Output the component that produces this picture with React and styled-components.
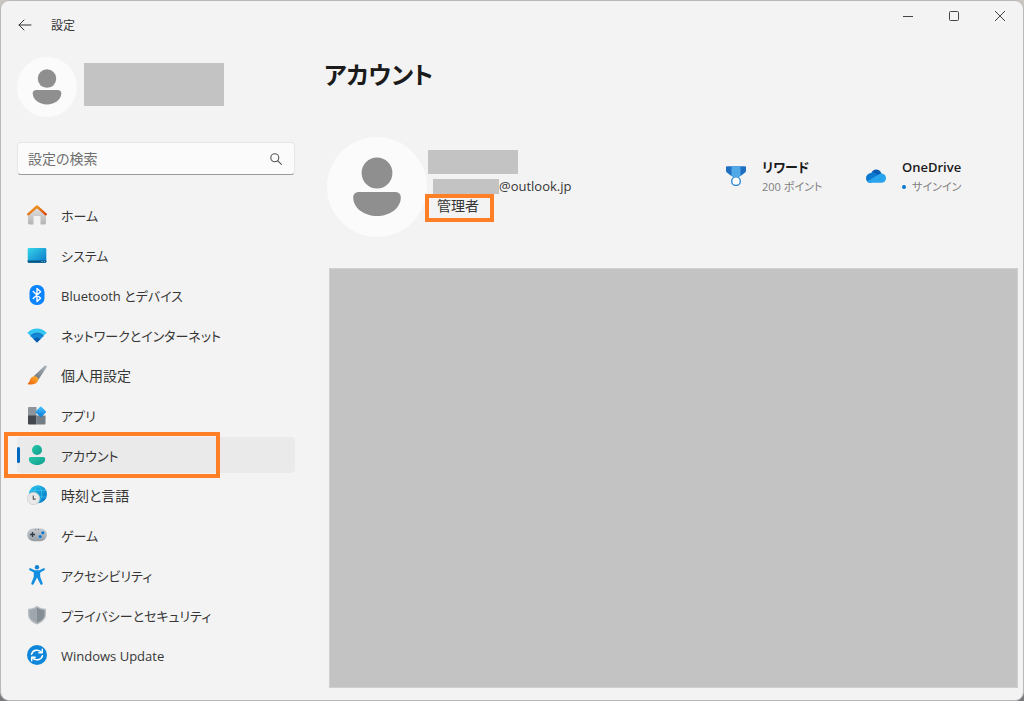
import React from "react";
import styled, { createGlobalStyle, css } from "styled-components";

const GlobalStyle = createGlobalStyle`
  *, *::before, *::after { box-sizing: border-box; }
  body {
    margin: 0;
    background: linear-gradient(to bottom, #c9c6c0 50%, #77777c);
    color: #363636;
    font-family: "Open Sans", "Noto Sans CJK JP", sans-serif;
    font-size: 14px;
    line-height: 20px;
    font-feature-settings: "palt";
  }
  button, input { font: inherit; color: inherit; font-feature-settings: inherit; }
  h1, h2, p, ul { margin: 0; padding: 0; }
`;

const Window = styled.div`
  display: flex;
  flex-direction: column;
  min-height: 100vh;
  border: 1px solid #b8b8b8;
  border-radius: 9px;
  background: #f3f3f3;
`;

const TitleBar = styled.header`
  display: flex;
  align-items: center;
  height: 48px;
  padding-left: 12px;
`;

const BackButton = styled.button`
  display: grid;
  place-items: center;
  width: 24px;
  height: 24px;
  padding: 0;
  border: 0;
  background: none;
`;

const AppName = styled.span`
  margin-left: 14px;
  padding-top: 2px;
  font-size: 12px;
`;

const CaptionButtons = styled.div`
  display: flex;
  align-self: flex-start;
  margin-left: auto;
`;

const CaptionButton = styled.button`
  display: grid;
  place-items: center;
  width: 46px;
  height: 30px;
  padding: 0;
  border: 0;
  background: none;
`;

const Body = styled.div`
  display: flex;
  flex: 1;
  gap: 29px;
  padding: 8px 5px 12px 16px;
`;

const Sidebar = styled.aside`
  flex: none;
  width: 278px;
`;

const UserCard = styled.div`
  display: flex;
  align-items: flex-start;
  gap: 7px;
`;

const Avatar = styled.svg`
  display: block;
  flex: none;
  width: ${(p) => p.$size}px;
  height: ${(p) => p.$size}px;
`;

const Mask = styled.span`
  display: block;
  flex: none;
  width: ${(p) => p.$w}px;
  height: ${(p) => p.$h}px;
  background: #c3c3c3;
`;

const UserMask = styled(Mask)`
  margin-top: 6px;
`;

const SearchBox = styled.label`
  display: flex;
  align-items: center;
  height: 33px;
  margin-top: 25px;
  padding: 0 12px 0 10px;
  border: 1px solid #e6e6e6;
  border-bottom-color: #9a9a9a;
  border-radius: 4px;
  background: #fbfbfb;
`;

const SearchInput = styled.input`
  flex: 1;
  min-width: 0;
  padding: 0;
  border: 0;
  outline: 0;
  background: none;
  &::placeholder { color: #707070; opacity: 1; }
`;

const NavList = styled.ul`
  display: flex;
  flex-direction: column;
  gap: 4px;
  margin-top: 22px;
  list-style: none;
`;

const NavItem = styled.li`
  position: relative;
`;

const NavLink = styled.a`
  display: flex;
  align-items: center;
  gap: 14px;
  height: 36px;
  padding-left: 10px;
  border-radius: 4px;
  color: inherit;
  text-decoration: none;
  ${(p) =>
    p.$active &&
    css`
      background: #eaeaea;
      &::before {
        content: "";
        position: absolute;
        left: 0;
        top: 10px;
        width: 3px;
        height: 16px;
        border-radius: 2px;
        background: #0067c0;
      }
    `}
`;

const NavLabel = styled.span`
  padding-top: 2px;
  font-size: ${(p) => (p.$kanji ? 14 : 13)}px;
`;

const NavIcon = styled.svg`
  display: block;
  flex: none;
  width: 20px;
  height: 20px;
`;

const Marker = styled.span`
  position: absolute;
  border: 4px solid #ff7f27;
  pointer-events: none;
`;

const NavMarker = styled(Marker)`
  left: -13px;
  top: -5px;
  width: 216px;
  height: 46px;
`;

const RoleMarker = styled(Marker)`
  left: -12px;
  top: -2px;
  width: 69px;
  height: 28px;
`;

const Main = styled.main`
  display: flex;
  flex: 1;
  flex-direction: column;
  min-width: 0;
`;

const Heading = styled.h1`
  font-size: 24px;
  font-weight: 600;
  line-height: 36px;
  color: #1b1b1b;
`;

const Profile = styled.section`
  display: flex;
  margin-top: 44px;
  padding: 0 12px 0 3px;
`;

const Identity = styled.div`
  padding: 13px 0 0 1px;
`;

const EmailRow = styled.p`
  display: flex;
  align-items: center;
  margin-top: 2px;
  padding-left: 5px;
  font-size: 13px;
`;

const Role = styled.p`
  position: relative;
  width: max-content;
  margin-left: 9px;
`;

const Services = styled.div`
  display: flex;
  margin-left: auto;
  padding-top: 20px;
`;

const Service = styled.a`
  display: flex;
  gap: 16px;
  width: 140px;
  color: inherit;
  text-decoration: none;
`;

const ServiceIcon = styled(NavIcon)`
  margin-top: 9px;
`;

const ServiceName = styled.span`
  display: block;
  font-size: 13px;
  font-weight: 600;
  color: #1b1b1b;
`;

const ServiceNote = styled.span`
  display: flex;
  align-items: center;
  gap: 6px;
  font-size: 11px;
  color: #808080;
`;

const Dot = styled.span`
  width: 4px;
  height: 4px;
  border-radius: 50%;
  background: #0078d4;
`;

const Panel = styled.section`
  flex: 1;
  margin: 31px 0 0 5px;
  border: 1px solid #cfcfcf;
  background: #c3c3c3;
`;

function Person({ size }) {
  return (
    <Avatar $size={size} viewBox="0 0 100 100" aria-hidden="true">
      <circle cx="50" cy="50" r="50" fill="#fbfbfb" />
      <circle cx="50" cy="36" r="15.4" fill="#8f8f8f" />
      <path d="M32 55h36c3.600 0 5.800 2.200 5.800 5.500C73.800 71 63 79 50 79S26.200 71 26.200 60.500C26.200 57.200 28.400 55 32 55z" fill="#8f8f8f" />
    </Avatar>
  );
}

const icons = {
  home: (
    <>
      <defs>
        <linearGradient id="homeWall" x1="0" y1="0" x2="0" y2="1"><stop stopColor="#e4e4e4" /><stop offset="1" stopColor="#b4b4b4" /></linearGradient>
        <linearGradient id="homeRoof" x1="0" y1="0" x2="1" y2="1"><stop stopColor="#f5a623" /><stop offset="1" stopColor="#d9480f" /></linearGradient>
      </defs>
      <path d="M1 9.500 10 1.500l9 8V18a1.400 1.400 0 0 1-1.400 1.400H13.500V12a1 1 0 0 0-1-1h-5a1 1 0 0 0-1 1v7.400H2.400A1.400 1.400 0 0 1 1 18z" fill="url(#homeWall)" />
      <path d="M1.200 9.300 10 1.500l8.800 7.800" fill="none" stroke="url(#homeRoof)" strokeWidth="2.400" strokeLinecap="round" strokeLinejoin="round" />
    </>
  ),
  system: (
    <>
      <defs><linearGradient id="sys" x1="0" y1="0" x2="1" y2="1"><stop stopColor="#35d6ea" /><stop offset="1" stopColor="#0a76c9" /></linearGradient></defs>
      <rect x="0.700" y="3" width="18.600" height="14.700" rx="1.200" fill="url(#sys)" />
      <path d="M.7 15.500h18.600v1a1.200 1.200 0 0 1-1.200 1.200H1.900A1.200 1.200 0 0 1 .7 16.500z" fill="#075384" />
      <path d="M14.500 16.500h1m1.300 0h1" stroke="#8edcf5" strokeWidth=".8" />
    </>
  ),
  bluetooth: (
    <>
      <rect x="2.500" y="0" width="15" height="20" rx="7" fill="#0a84ff" />
      <path d="m6.200 6.500 7.400 6.700L10 16.500v-13l3.600 3.200-7.400 6.800" fill="none" stroke="#fff" strokeWidth="1.400" strokeLinejoin="round" strokeLinecap="round" />
    </>
  ),
  network: (
    <>
      <path d="M.3 7.800C5.700 2 14.300 2 19.700 7.800L10 17.500z" fill="#35c5f3" />
      <path d="M3.500 11c3.700-3.800 9.300-3.800 13 0L10 17.500z" fill="#1486d8" />
      <path d="M6.500 14c2-2.100 5-2.100 7 0L10 17.500z" fill="#0a5dac" />
      <path d="M3.500 11c3.700-3.800 9.300-3.800 13 0" fill="none" stroke="#0c62ad" strokeWidth=".8" />
    </>
  ),
  personal: (
    <>
      <defs>
        <linearGradient id="handle" x1="1" y1="0" x2="0" y2="1"><stop stopColor="#b0bac2" /><stop offset="1" stopColor="#626b74" /></linearGradient>
        <linearGradient id="bristle" x1="1" y1="0" x2="0" y2="1"><stop stopColor="#ffb32e" /><stop offset="1" stopColor="#e95d0f" /></linearGradient>
      </defs>
      <path d="M17.600.8c1.500-1 2.700.2 1.900 1.700L11 15.200 6.500 11.400z" fill="url(#handle)" />
      <path d="M6.500 11.400c3.500-.7 5.900 2.300 4.100 5C8.400 19.700 4 19.900.4 18.900c2.900-1.600 2-6.700 6.100-7.500z" fill="url(#bristle)" />
    </>
  ),
  apps: (
    <>
      <defs><linearGradient id="diamond" x1="0" y1="0" x2="1" y2="1"><stop stopColor="#4bc7ff" /><stop offset="1" stopColor="#0775d5" /></linearGradient></defs>
      <path d="M1 3a1 1 0 0 1 1-1h7.500v9H1z" fill="#8d949b" />
      <path d="M1 10.500h8.500v9H2a1 1 0 0 1-1-1z" fill="#43484e" />
      <path d="M9.500 10.500h9v8a1 1 0 0 1-1 1h-8z" fill="#757d85" />
      <rect x="9.800" y="2.800" width="8" height="8" rx=".9" transform="rotate(45 13.800 6.800)" fill="url(#diamond)" />
    </>
  ),
  accounts: (
    <>
      <defs><linearGradient id="acct" x1="0" y1="0" x2="1" y2="1"><stop stopColor="#26c9a7" /><stop offset="1" stopColor="#109d90" /></linearGradient></defs>
      <circle cx="10" cy="5" r="5" fill="url(#acct)" />
      <path d="M3.800 12h12.400c1.300 0 2 .8 2 2 0 3.500-3.700 6-8.200 6s-8.200-2.500-8.200-6c0-1.200.7-2 2-2z" fill="url(#acct)" />
    </>
  ),
  time: (
    <>
      <defs><linearGradient id="globe" x1="0" y1="0" x2="1" y2="1"><stop stopColor="#28c5ee" /><stop offset="1" stopColor="#0873c4" /></linearGradient></defs>
      <circle cx="11" cy="9.200" r="9" fill="url(#globe)" />
      <path d="M11 .2c-5 5-5 13 0 18 5-5 5-13 0-18zM3 5.500h16M2.300 12h17.200" fill="none" stroke="#42cdee" strokeWidth=".6" />
      <circle cx="6.500" cy="13.500" r="6.200" fill="#e8e8e8" stroke="#c5c5c5" strokeWidth=".6" />
      <path d="M6.300 10.500v3.700h2.400" fill="none" stroke="#5c5c5c" strokeWidth="1.200" />
    </>
  ),
  gaming: (
    <>
      <defs><linearGradient id="pad" x1="0" y1="0" x2="0" y2="1"><stop stopColor="#c8cdd2" /><stop offset="1" stopColor="#959da5" /></linearGradient></defs>
      <rect x=".2" y="3.200" width="19.600" height="13" rx="6.400" fill="url(#pad)" />
      <path d="M5.500 7v5M3 9.500h5" stroke="#343a40" strokeWidth="1.300" />
      <circle cx="15.800" cy="7.800" r="1.500" fill="#0878d4" />
      <circle cx="13.200" cy="11.600" r="1.500" fill="#0878d4" />
      <path d="M8.300 4.700h.9m1.800 0h.9" stroke="#555" strokeWidth="1" />
    </>
  ),
  accessibility: (
    <>
      <circle cx="10" cy="2.300" r="2.200" fill="#0f82d4" />
      <path d="M3.600 3.300 7.700 5.200h4.600l4.100-1.900c1.500-.6 2.200 1.300.9 2L13.200 7.600v4.200l2.400 6.300c.5 1.600-1.500 2.500-2.300.9L10 12.600 6.700 19c-.8 1.600-2.800.7-2.300-.9l2.400-6.300V7.600L2.700 5.300c-1.300-.7-.6-2.600.9-2z" fill="#128ee0" />
    </>
  ),
  privacy: (
    <>
      <path d="M10 .8c2.500 1.900 5.500 2.900 9 3v5.400c0 4.900-3.700 8.200-9 10.200C4.700 17.400 1 14.100 1 9.200V3.800c3.500-.1 6.500-1.100 9-3z" fill="#b9bec2" />
      <path d="M10 2.500c2.200 1.500 4.700 2.400 7.500 2.600v4.400c0 3.900-2.900 6.600-7.500 8.400z" fill="#858d95" />
      <path d="M10 2.500C7.800 4 5.300 4.900 2.500 5.100v4.400c0 3.900 2.900 6.600 7.500 8.400z" fill="#9fa6ad" />
    </>
  ),
  update: (
    <>
      <circle cx="10" cy="10" r="10" fill="#0e86da" />
      <path d="M4.500 9.300C5.500 4.900 11.500 3.600 14.800 7.400M15.500 10.700C14.500 15.100 8.500 16.400 5.200 12.600" fill="none" stroke="#fff" strokeWidth="1.500" strokeLinecap="round" />
      <path d="M15.300 4.300v3.500h-3.500M4.700 15.700v-3.500h3.500" fill="none" stroke="#fff" strokeWidth="1.400" strokeLinecap="round" strokeLinejoin="round" />
    </>
  ),
};

const navItems = [
  { id: "home", label: "ホーム" },
  { id: "system", label: "システム" },
  { id: "bluetooth", label: "Bluetooth とデバイス" },
  { id: "network", label: "ネットワークとインターネット" },
  { id: "personal", label: "個人用設定", kanji: true },
  { id: "apps", label: "アプリ" },
  { id: "accounts", label: "アカウント", active: true },
  { id: "time", label: "時刻と言語", kanji: true },
  { id: "gaming", label: "ゲーム" },
  { id: "accessibility", label: "アクセシビリティ" },
  { id: "privacy", label: "プライバシーとセキュリティ" },
  { id: "update", label: "Windows Update" },
];

export default function App() {
  return (
    <>
      <GlobalStyle />
      <Window lang="ja">
        <TitleBar>
          <BackButton aria-label="戻る">
            <svg width="14" height="12" viewBox="0 0 14 12" fill="none" stroke="#333" strokeLinecap="round" strokeLinejoin="round">
              <path d="M13 6H1M6 1 1 6l5 5" />
            </svg>
          </BackButton>
          <AppName>設定</AppName>
          <CaptionButtons>
            <CaptionButton aria-label="最小化">
              <svg width="10" height="10" viewBox="0 0 10 10" stroke="#444"><path d="M0 5.500h10" /></svg>
            </CaptionButton>
            <CaptionButton aria-label="最大化">
              <svg width="10" height="10" viewBox="0 0 10 10" fill="none" stroke="#444"><rect x=".5" y=".5" width="9" height="9" rx="1" /></svg>
            </CaptionButton>
            <CaptionButton aria-label="閉じる">
              <svg width="10" height="10" viewBox="0 0 10 10" stroke="#444"><path d="m0 0 10 10M10 0 0 10" /></svg>
            </CaptionButton>
          </CaptionButtons>
        </TitleBar>
        <Body>
          <Sidebar>
            <UserCard>
              <Person size={60} />
              <UserMask $w={140} $h={43} />
            </UserCard>
            <SearchBox>
              <SearchInput type="text" placeholder="設定の検索" aria-label="設定の検索" />
              <svg width="12" height="12" viewBox="0 0 12 12" fill="none" stroke="#555" strokeWidth="1.100" strokeLinecap="round">
                <circle cx="4.800" cy="4.800" r="4" />
                <path d="m7.800 7.800 3.600 3.600" />
              </svg>
            </SearchBox>
            <nav>
              <NavList>
                {navItems.map(({ id, label, kanji, active }) => (
                  <NavItem key={id}>
                    <NavLink href={`#${id}`} $active={active} aria-current={active ? "page" : undefined}>
                      <NavIcon viewBox="0 0 20 20" aria-hidden="true">{icons[id]}</NavIcon>
                      <NavLabel $kanji={kanji}>{label}</NavLabel>
                    </NavLink>
                    {active && <NavMarker />}
                  </NavItem>
                ))}
              </NavList>
            </nav>
          </Sidebar>
          <Main>
            <Heading>アカウント</Heading>
            <Profile>
              <Person size={100} />
              <Identity>
                <Mask $w={90} $h={24} />
                <EmailRow>
                  <Mask $w={66} $h={15} />
                  @outlook.jp
                </EmailRow>
                <Role>
                  管理者
                  <RoleMarker />
                </Role>
              </Identity>
              <Services>
                <Service href="#rewards">
                  <ServiceIcon viewBox="0 0 20 20" aria-hidden="true">
                    <circle cx="10" cy="15.200" r="4.300" fill="#fff" stroke="#2b88d8" strokeWidth="1.400" />
                    <path d="M1.200.3h17.600c.8 0 1.200.5 1.200 1.200v3.300c0 .7-.3 1.300-.9 1.700L14.600 10H5.400L.9 6.500C.3 6.100 0 5.500 0 4.800V1.500C0 .8.4.3 1.200.3z" fill="#1f6fc0" />
                    <path d="M5.500.3h9V10l-1.300 1H6.800l-1.300-1z" fill="#50a8e8" />
                  </ServiceIcon>
                  <span>
                    <ServiceName>リワード</ServiceName>
                    <ServiceNote>200 ポイント</ServiceNote>
                  </span>
                </Service>
                <Service href="#onedrive">
                  <ServiceIcon viewBox="0 0 20 20" aria-hidden="true">
                    <path d="M5 8C6.500 2.500 13.500 2 15.500 7.500l-5 4z" fill="#0a5cb0" />
                    <path d="M5 7c2.500-1 4 0 5.500 1l5 3L5 16.800C1.500 17 0 14.500 0 12c0-2.500 2-4.700 5-5z" fill="#0b78d0" />
                    <path d="M15.500 7.500C18.500 7.800 20 9.800 20 12.300c0 2.700-1.900 4.500-4.500 4.500H5c-1.600 0-2.800-.6-3.600-1.600L13 8.300c.8-.5 1.600-.8 2.500-.8z" fill="#27a4ec" />
                  </ServiceIcon>
                  <span>
                    <ServiceName>OneDrive</ServiceName>
                    <ServiceNote><Dot />サインイン</ServiceNote>
                  </span>
                </Service>
              </Services>
            </Profile>
            <Panel aria-label="アカウントの設定" />
          </Main>
        </Body>
      </Window>
    </>
  );
}
